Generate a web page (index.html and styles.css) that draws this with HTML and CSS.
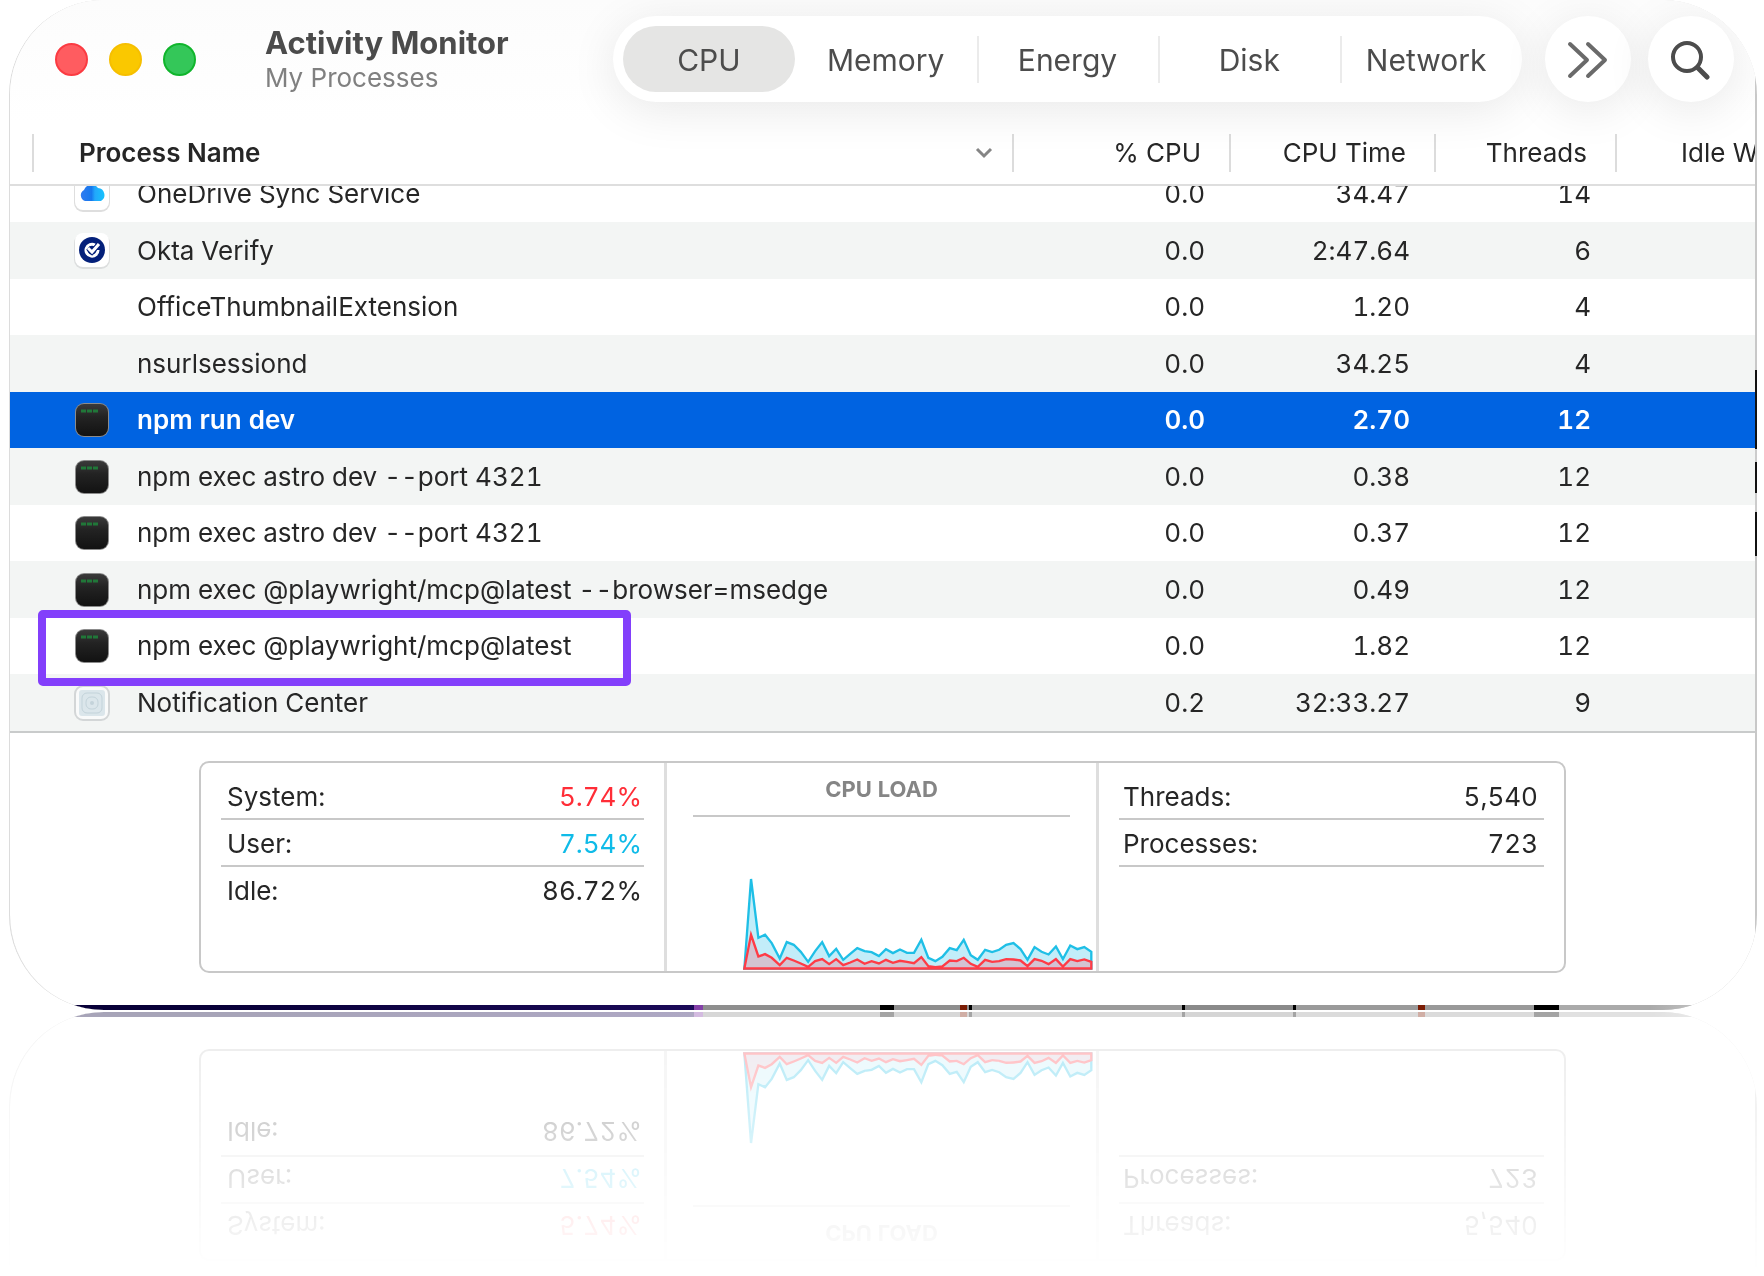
FILE: index.html
```
<!DOCTYPE html>
<html lang="en">
<head>
  <meta charset="UTF-8" />
  <meta name="viewport" content="width=device-width, initial-scale=1.0"/>
  <title>Activity Monitor</title>
  <link rel="stylesheet" href="styles.css">
</head>
<body>

  <!-- app icons used in the process list -->
  <svg class="sprite" aria-hidden="true">
    <defs>
      <linearGradient id="cloudFill" x1="0" x2="1">
        <stop offset="0" stop-color="#2f7bf0" />
        <stop offset="0.45" stop-color="#1678ee" />
        <stop offset="0.6" stop-color="#22a8fb" />
        <stop offset="1" stop-color="#17c2fd" />
      </linearGradient>
      <linearGradient id="termFill" x1="0" x2="0" y1="0" y2="1">
        <stop offset="0" stop-color="#3a3a3a" />
        <stop offset="0.4" stop-color="#232323" />
        <stop offset="1" stop-color="#121212" />
      </linearGradient>
    </defs>
    <symbol id="icon-onedrive" viewBox="0 0 36 36">
      <rect x="0" y="1" width="36" height="35" rx="9" fill="#dedede" />
      <rect x="1" y="0" width="34" height="34" rx="8" fill="#fff" />
      <path d="M11 25a6 6 0 0 1-1-11 8 8 0 0 1 14-2 7 7 0 0 1 3 13z" fill="url(#cloudFill)" />
    </symbol>
    <symbol id="icon-okta" viewBox="0 0 36 36">
      <rect x="0" y="1" width="36" height="35" rx="9" fill="#dcdede" />
      <rect x="1" y="0" width="34" height="34" rx="8" fill="#fff" />
      <circle cx="18" cy="17" r="13" fill="#04207a" />
      <path d="M24 17a6 6 0 1 1-3-5" fill="none" stroke="#fff" stroke-width="3" />
      <path d="M14 15l4 4 8-9" fill="none" stroke="#04207a" stroke-width="5" />
      <path d="M14 15l4 4 7-8" fill="none" stroke="#fff" stroke-width="3" />
    </symbol>
    <symbol id="icon-exec" viewBox="0 0 36 36">
      <rect x="1" y="1" width="34" height="34" rx="9" fill="#8b8b8b" />
      <rect x="2" y="2" width="32" height="32" rx="8" fill="url(#termFill)" />
      <path d="M7 9h17" stroke="#1e8a3c" stroke-width="3" stroke-dasharray="5 1" opacity="0.8" />
    </symbol>
    <symbol id="icon-generic" viewBox="0 0 36 36">
      <rect x="1" y="1" width="34" height="34" rx="8" fill="#f9fafa" stroke="#d3d6d7" stroke-width="2" />
      <rect x="5" y="5" width="26" height="26" rx="3" fill="#dbe6eb" />
      <rect x="8" y="8" width="20" height="20" rx="5" fill="none" stroke="#c3d3da" />
      <rect x="12" y="12" width="12" height="12" rx="5" fill="none" stroke="#c3d3da" />
      <circle cx="18" cy="18" r="2" fill="#c3d3da" />
    </symbol>
  </svg>

  <main class="reflected">
    <div class="window">
      <div class="window-body">

        <header class="toolbar">
          <div class="lights">
            <button class="light light-close" aria-label="Close"></button>
            <button class="light light-min" aria-label="Minimize"></button>
            <button class="light light-max" aria-label="Zoom"></button>
          </div>
          <div class="title">
            <h1>Activity Monitor</h1>
            <p>My Processes</p>
          </div>
          <nav class="tabs">
            <button class="tab active">CPU</button>
            <button class="tab">Memory</button>
            <button class="tab">Energy</button>
            <button class="tab">Disk</button>
            <button class="tab">Network</button>
          </nav>
          <button class="round-btn more-btn" aria-label="More">
            <svg width="42" height="42" viewBox="0 0 42 42" fill="none" stroke="#6a6a6a" stroke-width="4" stroke-linecap="round" stroke-linejoin="round"><path d="M3 6l17 16L3 38M21 6l17 16-17 16" /></svg>
          </button>
          <button class="round-btn" aria-label="Search">
            <svg width="42" height="42" viewBox="0 0 42 42" fill="none" stroke="#4c4c4c" stroke-linecap="round"><circle cx="17" cy="19" r="14" stroke-width="4" /><path d="M28 30l9 9" stroke-width="5" /></svg>
          </button>
        </header>

        <table class="columns">
          <colgroup><col><col class="c-cpu"><col class="c-time"><col class="c-threads"><col class="c-idle"></colgroup>
          <thead>
            <tr>
              <th class="name sorted" scope="col">
                <div class="sort">Process Name
                  <svg width="18" height="12" viewBox="0 0 18 12" fill="none" stroke="#858585" stroke-width="3"><path d="M2 2l7 7 7-7" /></svg>
                </div>
              </th>
              <th scope="col">% CPU</th>
              <th scope="col">CPU Time</th>
              <th scope="col">Threads</th>
              <th class="idle" scope="col">Idle Wake Ups</th>
            </tr>
          </thead>
        </table>

        <div class="list">
          <table class="processes" aria-label="Processes">
            <colgroup><col><col class="c-cpu"><col class="c-time"><col class="c-threads"><col class="c-idle"></colgroup>
            <tbody>
              <tr>
                <td class="name"><div class="proc"><svg class="icon"><use href="#icon-onedrive" /></svg>OneDrive Sync Service</div></td>
                <td>0.0</td><td>34.47</td><td>14</td><td></td>
              </tr>
              <tr>
                <td class="name"><div class="proc"><svg class="icon"><use href="#icon-okta" /></svg>Okta Verify</div></td>
                <td>0.0</td><td>2:47.64</td><td>6</td><td></td>
              </tr>
              <tr>
                <td class="name"><div class="proc"><span class="icon"></span>OfficeThumbnailExtension</div></td>
                <td>0.0</td><td>1.20</td><td>4</td><td></td>
              </tr>
              <tr>
                <td class="name"><div class="proc"><span class="icon"></span>nsurlsessiond</div></td>
                <td>0.0</td><td>34.25</td><td>4</td><td></td>
              </tr>
              <tr class="selected">
                <td class="name"><div class="proc"><svg class="icon"><use href="#icon-exec" /></svg>npm run dev</div></td>
                <td>0.0</td><td>2.70</td><td>12</td><td></td>
              </tr>
              <tr>
                <td class="name"><div class="proc"><svg class="icon"><use href="#icon-exec" /></svg>npm exec astro dev --port 4321</div></td>
                <td>0.0</td><td>0.38</td><td>12</td><td></td>
              </tr>
              <tr>
                <td class="name"><div class="proc"><svg class="icon"><use href="#icon-exec" /></svg>npm exec astro dev --port 4321</div></td>
                <td>0.0</td><td>0.37</td><td>12</td><td></td>
              </tr>
              <tr>
                <td class="name"><div class="proc"><svg class="icon"><use href="#icon-exec" /></svg>npm exec @playwright/mcp@latest --browser=msedge</div></td>
                <td>0.0</td><td>0.49</td><td>12</td><td></td>
              </tr>
              <tr>
                <td class="name marked"><div class="proc"><svg class="icon"><use href="#icon-exec" /></svg>npm exec @playwright/mcp@latest</div></td>
                <td>0.0</td><td>1.82</td><td>12</td><td></td>
              </tr>
              <tr>
                <td class="name"><div class="proc"><svg class="icon"><use href="#icon-generic" /></svg>Notification Center</div></td>
                <td>0.2</td><td>32:33.27</td><td>9</td><td></td>
              </tr>
            </tbody>
          </table>
        </div>

        <footer class="summary">
          <div class="panel">
            <dl class="stats">
              <div><dt>System:</dt><dd class="system">5.74%</dd></div>
              <div><dt>User:</dt><dd class="user">7.54%</dd></div>
              <div><dt>Idle:</dt><dd>86.72%</dd></div>
            </dl>
            <section class="load">
              <h2>CPU LOAD</h2>
              <svg class="chart" viewBox="250 408 1048 280" role="img" aria-label="CPU load over time">
                <path d="M254 682L274 414 296 590 316 581 336 606 360 652 381 603 402 611 423 632 445 662 466 630 487 603 508 645 529 623 550 656 571 638 592 621 614 630 635 633 657 645 678 624 699 636 720 625 741 635 762 635 784 596 805 650 826 660 847 647 869 621 890 627 911 596 932 642 953 656 975 626 996 633 1017 626 1038 611 1060 606 1081 624 1102 656 1123 618 1144 632 1165 640 1187 616 1208 654 1230 613 1251 624 1272 618 1293 632V682Z" fill="#c2edf9" stroke="#1fbfe6" stroke-width="7" />
                <path d="M254 682L274 581 296 646 316 639 336 650 360 672 381 650 402 658 423 667 445 677 466 660 487 654 508 669 529 654 550 672 571 664 592 655 614 668 635 660 657 667 678 656 699 665 720 659 741 662 762 666 784 648 805 675 826 678 847 676 869 658 890 660 911 650 932 668 953 677 975 656 996 662 1017 660 1038 654 1060 655 1081 658 1102 675 1123 654 1144 659 1165 669 1187 654 1208 676 1230 654 1251 660 1272 655 1293 662V682Z" fill="#d3c3d2" stroke="#ff3b46" stroke-width="7" />
              </svg>
            </section>
            <dl class="stats ruled">
              <div><dt>Threads:</dt><dd>5,540</dd></div>
              <div><dt>Processes:</dt><dd>723</dd></div>
            </dl>
          </div>
        </footer>

      </div>
    </div>
  </main>

</body>
</html>
```

FILE: styles.css
```
* {
  box-sizing: border-box;
}

body {
  margin: 0;
  min-height: 100vh;
  background: #fff;
  color: #262626;
  font-family: Inter, "Liberation Sans", sans-serif;
  font-size: 26px;
  line-height: 34px;
  font-variant-ligatures: no-contextual;
}

h1, h2, p, dl, dd {
  margin: 0;
}

button {
  border: none;
  padding: 0;
  font: inherit;
  cursor: pointer;
}

.sprite {
  position: absolute;
  width: 0;
  height: 0;
}

.reflected {
  -webkit-box-reflect: below 2px linear-gradient(transparent 74%, rgba(0, 0, 0, 0.36));
}

/* Window: the padding lets the desktop behind show along the right and bottom edges */
.window {
  margin: 0 7px 0 9px;
  padding: 0 2px 5px 0;
  border-left: 1px solid #dcdcdc;
  border-radius: 95px;
  overflow: hidden;
  background:
    linear-gradient(90deg,
      #080038 0 200px, #1b0a58 684px, #8440a8 684px 693px,
      #8e8e8e 693px 870px, #000 870px 884px,
      #8e8e8e 884px 950px, #7a1c04 950px 957px, #8e8e8e 957px 959px, #000 959px 962px,
      #9a9a9a 962px 1172px, #000 1172px 1175px,
      #8a8a8a 1175px 1283px, #000 1283px 1286px,
      #9a9a9a 1286px 1408px, #7a1c04 1408px 1415px,
      #999 1415px 1524px, #000 1524px 1549px, #aaa 1549px 1640px, #ddd) bottom / 100% 5px no-repeat,
    linear-gradient(#c8c8c8 0 370px, #111 370px 449px, #ccc 449px 462px, #111 462px 493px,
      #ccc 493px 512px, #111 512px 556px, #c8c8c8 556px);
}

.window-body {
  overflow: hidden;
  background: #fff;
}

/* Toolbar */
.toolbar {
  display: flex;
  align-items: center;
  padding: 16px 21px 20px 45px;
  background: linear-gradient(#fcfcfc, #fff);
}

.lights {
  display: flex;
  gap: 21px;
}

.light {
  width: 33px;
  height: 33px;
  border-radius: 50%;
}

.light-close {
  background: #ff5c60;
  border: 2px solid #fb3b42;
}

.light-min {
  background: #fac800;
  border: 2px solid #f6bf00;
}

.light-max {
  background: #34c759;
  border: 2px solid #10b52c;
}

.title {
  margin-left: 69px;
  margin-right: auto;
  padding-top: 2px;
}

.title h1 {
  font-size: 31px;
  line-height: 36px;
  font-weight: 700;
  color: #4b4b4b;
}

.title p {
  color: #808080;
}

.tabs {
  display: flex;
  width: 909px;
  padding: 10px;
  border-radius: 43px;
  background: #fff;
  box-shadow: 0 8px 48px rgba(0, 0, 0, 0.09);
}

.tab {
  flex: 182;
  height: 66px;
  padding-top: 2px;
  font-size: 30px;
  color: #4c4c4c;
  background: linear-gradient(#ebebeb, #ebebeb) left center / 2px 47px no-repeat;
}

.tab:first-child,
.tab:last-child {
  flex: 172;
}

.tab:nth-child(-n+2) {
  background: none;
}

.tab.active {
  background: #e5e5e4;
  border-radius: 33px;
}

.round-btn {
  display: flex;
  align-items: center;
  justify-content: center;
  width: 86px;
  height: 86px;
  margin-left: 17px;
  border-radius: 50%;
  background: #fff;
  box-shadow: 0 8px 48px rgba(0, 0, 0, 0.09);
}

.more-btn {
  margin-left: 23px;
}

/* Process table */
table {
  width: 100%;
  table-layout: fixed;
  border-collapse: collapse;
}

.c-cpu {
  width: 217px;
}

.c-time {
  width: 205px;
}

.c-threads {
  width: 181px;
}

.c-idle {
  width: 140px;
}

th, td {
  padding: 0 24px 0 0;
  text-align: right;
  white-space: nowrap;
}

.columns {
  border-bottom: 2px solid #dedede;
}

.columns th {
  height: 63px;
  padding-right: 28px;
  font-weight: 400;
  background: linear-gradient(#dcdcdc, #dcdcdc) left center / 2px 38px no-repeat;
}

.columns .name {
  padding: 0 19px 0 69px;
  font-weight: 600;
  background-position: 22px center;
}

.columns .idle {
  padding: 0 0 0 66px;
  text-align: left;
  overflow: hidden;
}

.sort {
  display: flex;
  align-items: center;
  justify-content: space-between;
}

.list {
  overflow: hidden;
  border-bottom: 2px solid #c9cbcb;
}

/* scrolled a little, so the first row sits partly under the header */
.processes {
  margin-top: -20px;
  font-variant-numeric: tabular-nums;
}

.processes tr {
  height: 56px;
}

.processes tr:nth-child(even) {
  height: 57px;
  background: #f3f5f4;
}

.processes .selected {
  background: #0063e1;
  color: #fff;
  font-weight: 600;
}

.processes .name {
  padding: 0 0 0 64px;
  text-align: left;
}

.proc {
  display: flex;
  align-items: center;
  gap: 27px;
}

.icon {
  width: 36px;
  height: 36px;
}

.marked {
  position: relative;
}

.marked::after {
  content: "";
  position: absolute;
  top: -8px;
  bottom: -12px;
  left: 28px;
  width: 593px;
  max-width: 577px;
  border: 8px solid #833ffb;
  border-radius: 5px;
}

/* Summary */
.summary {
  padding: 28px 189px 32px;
}

.panel {
  display: grid;
  grid-template-columns: 464fr 436fr 466fr;
  min-height: 212px;
  border: 2px solid #c8c8c8;
  border-radius: 10px;
  font-variant-numeric: tabular-nums;
}

.stats {
  padding: 10px 20px;
}

.stats div {
  display: flex;
  justify-content: space-between;
  height: 47px;
  padding: 7px 2px 4px 6px;
  border-bottom: 2px solid #c8c8c8;
}

.stats:not(.ruled) div:last-child {
  border-bottom: none;
}

.stats.ruled div {
  padding-left: 4px;
  padding-right: 6px;
}

.system {
  color: #ff2d37;
}

.user {
  color: #0fbbe8;
}

.load {
  display: flex;
  flex-direction: column;
  border: solid #dedede;
  border-width: 0 3px;
}

.load h2 {
  margin: 0 26px;
  padding: 9px 0;
  border-bottom: 2px solid #c8c8c8;
  font-size: 22px;
  font-weight: 700;
  text-align: center;
  color: #858585;
}

.chart {
  width: 350px;
  margin: auto 3px 1px auto;
}
```
